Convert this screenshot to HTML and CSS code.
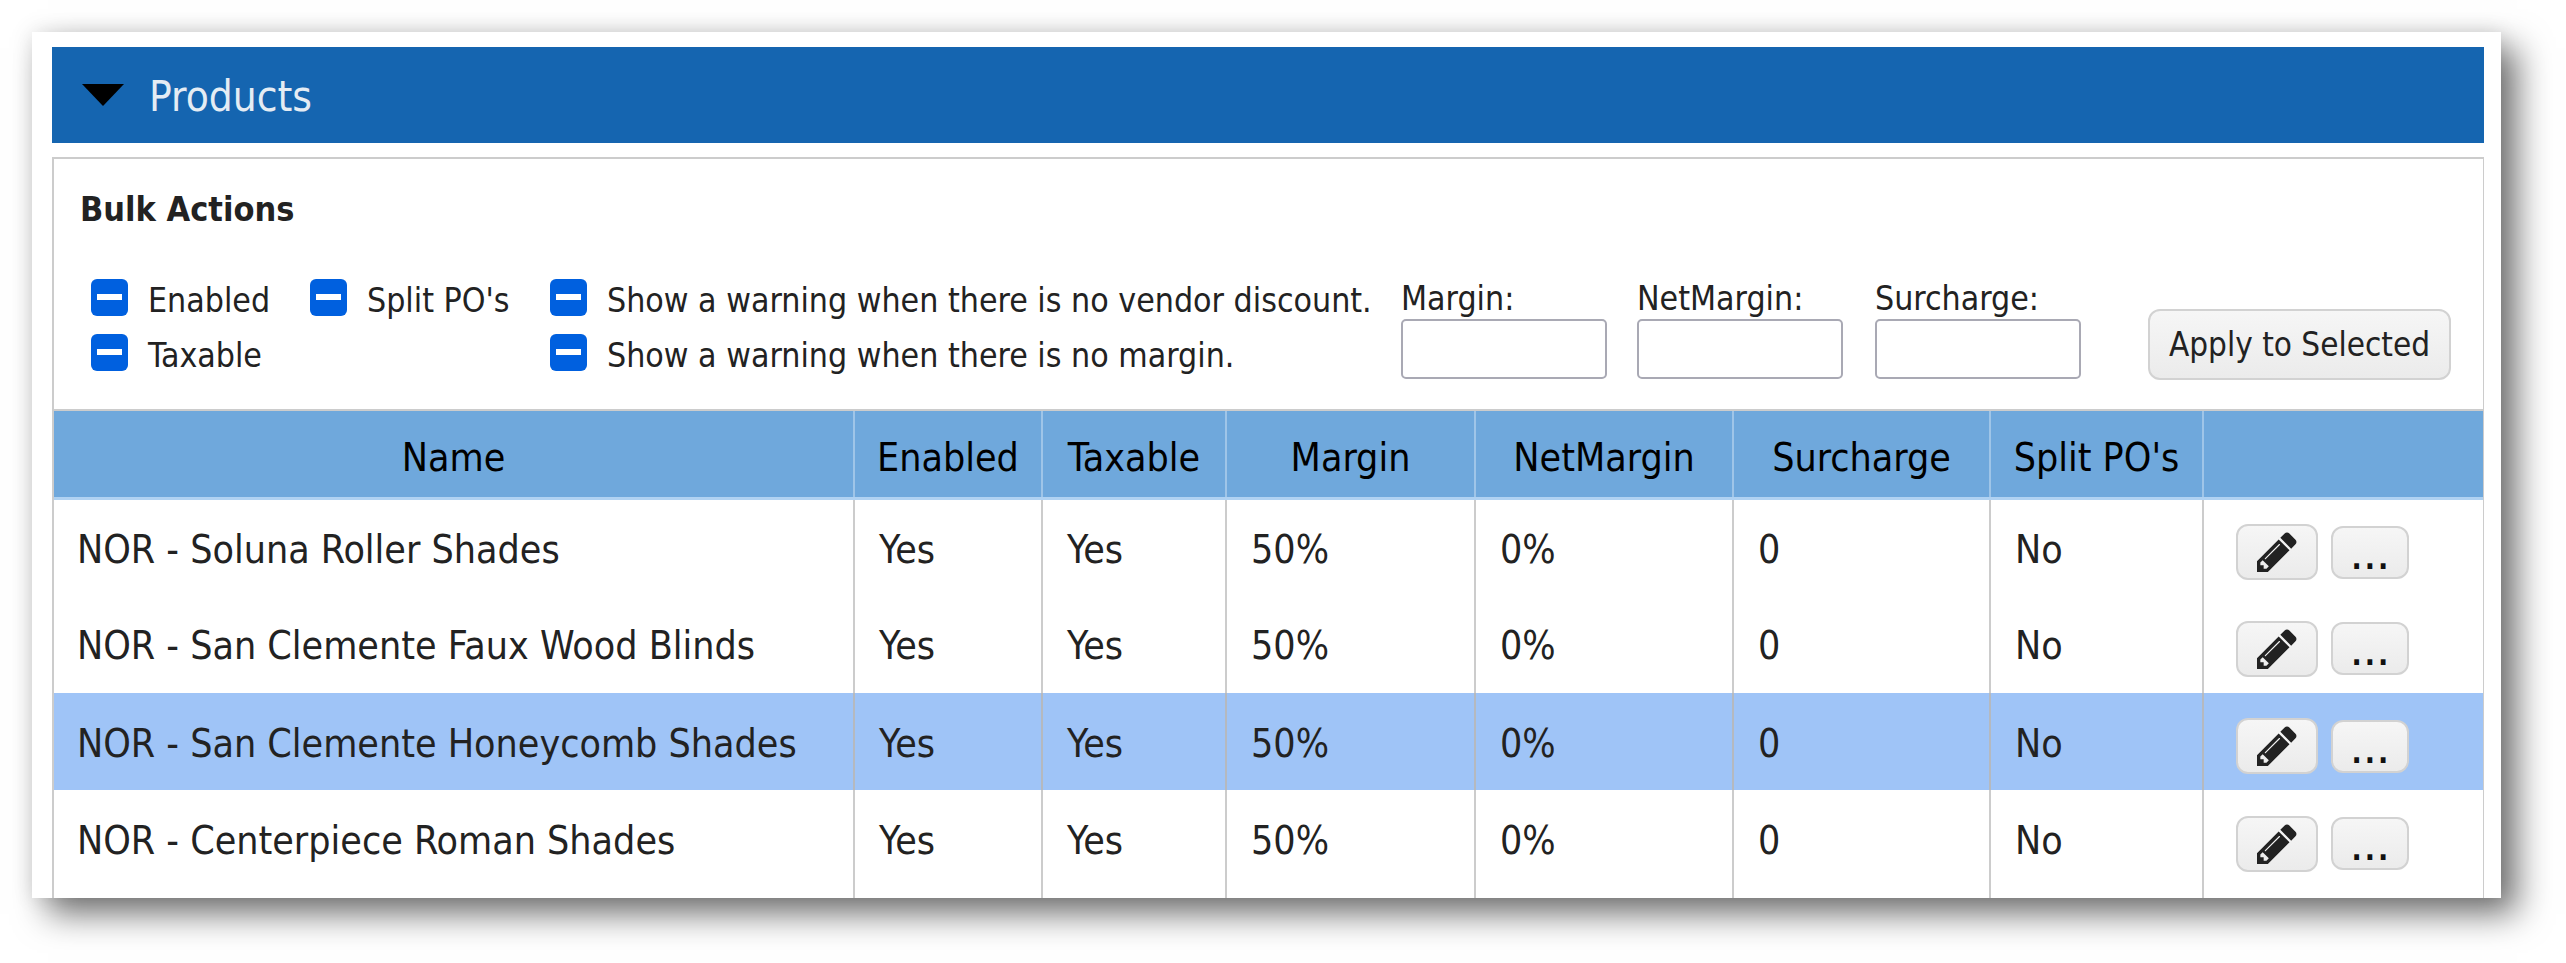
FILE: index.html
```html
<!DOCTYPE html>
<html lang="en">

<head>
    <meta charset="UTF-8">
    <title>Products</title>
    <link rel="stylesheet" href="styles.css">
</head>

<body>
    <div class="card">
        <div class="section-bar">
            <span class="arrow"></span>
            <span class="section-title">Products</span>
        </div>
        <div class="panel">
            <h2 class="bulk-title">Bulk Actions</h2>
            <div class="bulk-row">
                <div class="check-col check-col-a">
                    <label class="check"><span class="box"></span>Enabled</label>
                    <label class="check"><span class="box"></span>Taxable</label>
                </div>
                <div class="check-col check-col-b">
                    <label class="check"><span class="box"></span>Split PO's</label>
                </div>
                <div class="check-col check-col-c">
                    <label class="check"><span class="box"></span>Show a warning when there is no vendor discount.</label>
                    <label class="check"><span class="box"></span>Show a warning when there is no margin.</label>
                </div>
                <div class="field field-margin">
                    <label>Margin:</label>
                    <input type="text">
                </div>
                <div class="field field-net">
                    <label>NetMargin:</label>
                    <input type="text">
                </div>
                <div class="field field-surcharge">
                    <label>Surcharge:</label>
                    <input type="text">
                </div>
                <button class="btn apply-btn">Apply to Selected</button>
            </div>
            <table class="products">
                <colgroup>
                    <col class="col-name">
                    <col class="col-enabled">
                    <col class="col-taxable">
                    <col class="col-margin">
                    <col class="col-net">
                    <col class="col-surcharge">
                    <col class="col-split">
                    <col class="col-actions">
                </colgroup>
                <thead>
                    <tr>
                        <th>Name</th>
                        <th>Enabled</th>
                        <th>Taxable</th>
                        <th>Margin</th>
                        <th>NetMargin</th>
                        <th>Surcharge</th>
                        <th>Split PO's</th>
                        <th></th>
                    </tr>
                </thead>
                <tbody>
                    <tr>
                        <td>NOR - Soluna Roller Shades</td>
                        <td>Yes</td>
                        <td>Yes</td>
                        <td>50%</td>
                        <td>0%</td>
                        <td>0</td>
                        <td>No</td>
                        <td>
                            <div class="actions">
                                <button class="btn edit-btn"><svg class="pencil" viewBox="128 128 1536 1536"><path d="M491 1536l91-91-235-235-91 91v107h128v128h107zm523-928q0-22-22-22-10 0-17 7l-542 542q-7 7-7 17 0 22 22 22 10 0 17-7l542-542q7-7 7-17zm-54-192l416 416-832 832h-416v-416zm683 96q0 53-37 90l-166 166-416-416 166-165q36-38 90-38 53 0 91 38l235 234q37 39 37 91z"/></svg></button>
                                <button class="btn more-btn">...</button>
                            </div>
                        </td>
                    </tr>
                    <tr>
                        <td>NOR - San Clemente Faux Wood Blinds</td>
                        <td>Yes</td>
                        <td>Yes</td>
                        <td>50%</td>
                        <td>0%</td>
                        <td>0</td>
                        <td>No</td>
                        <td>
                            <div class="actions">
                                <button class="btn edit-btn"><svg class="pencil" viewBox="128 128 1536 1536"><path d="M491 1536l91-91-235-235-91 91v107h128v128h107zm523-928q0-22-22-22-10 0-17 7l-542 542q-7 7-7 17 0 22 22 22 10 0 17-7l542-542q7-7 7-17zm-54-192l416 416-832 832h-416v-416zm683 96q0 53-37 90l-166 166-416-416 166-165q36-38 90-38 53 0 91 38l235 234q37 39 37 91z"/></svg></button>
                                <button class="btn more-btn">...</button>
                            </div>
                        </td>
                    </tr>
                    <tr class="selected">
                        <td>NOR - San Clemente Honeycomb Shades</td>
                        <td>Yes</td>
                        <td>Yes</td>
                        <td>50%</td>
                        <td>0%</td>
                        <td>0</td>
                        <td>No</td>
                        <td>
                            <div class="actions">
                                <button class="btn edit-btn"><svg class="pencil" viewBox="128 128 1536 1536"><path d="M491 1536l91-91-235-235-91 91v107h128v128h107zm523-928q0-22-22-22-10 0-17 7l-542 542q-7 7-7 17 0 22 22 22 10 0 17-7l542-542q7-7 7-17zm-54-192l416 416-832 832h-416v-416zm683 96q0 53-37 90l-166 166-416-416 166-165q36-38 90-38 53 0 91 38l235 234q37 39 37 91z"/></svg></button>
                                <button class="btn more-btn">...</button>
                            </div>
                        </td>
                    </tr>
                    <tr>
                        <td>NOR - Centerpiece Roman Shades</td>
                        <td>Yes</td>
                        <td>Yes</td>
                        <td>50%</td>
                        <td>0%</td>
                        <td>0</td>
                        <td>No</td>
                        <td>
                            <div class="actions">
                                <button class="btn edit-btn"><svg class="pencil" viewBox="128 128 1536 1536"><path d="M491 1536l91-91-235-235-91 91v107h128v128h107zm523-928q0-22-22-22-10 0-17 7l-542 542q-7 7-7 17 0 22 22 22 10 0 17-7l542-542q7-7 7-17zm-54-192l416 416-832 832h-416v-416zm683 96q0 53-37 90l-166 166-416-416 166-165q36-38 90-38 53 0 91 38l235 234q37 39 37 91z"/></svg></button>
                                <button class="btn more-btn">...</button>
                            </div>
                        </td>
                    </tr>
                    <!-- next row runs off the bottom of the card -->
                    <tr>
                        <td></td>
                        <td></td>
                        <td></td>
                        <td></td>
                        <td></td>
                        <td></td>
                        <td></td>
                        <td></td>
                    </tr>
                </tbody>
            </table>
        </div>
    </div>
</body>

</html>
```
FILE: styles.css
```css
* {
    box-sizing: border-box;
}

body {
    margin: 0;
    height: 963px;
    overflow: hidden;
    background-color: #fff;
    padding: 32px 0 0 32px;
    font-family: "DejaVu Sans", "Liberation Sans", sans-serif;
    font-stretch: condensed;
    color: #222;
}

.card {
    width: 2469px;
    height: 866px;
    padding: 15px 17px 0 20px;
    overflow: hidden;
    background-color: #fff;
    box-shadow: 16px 16px 32px rgba(0, 0, 0, 0.55), 0 0 20px rgba(0, 0, 0, 0.1);
}

.section-bar {
    height: 96px;
    display: flex;
    align-items: center;
    padding: 0 0 0 30px;
    gap: 25px;
    background-color: #1565b0;
}

.arrow {
    width: 0;
    height: 0;
    border-left: 21px solid transparent;
    border-right: 21px solid transparent;
    border-top: 22px solid #000;
}

.section-title {
    padding-top: 2px;
    font-size: 42px;
    color: #e4ecf4;
}

.panel {
    margin-top: 14px;
    border: 2px solid #ccc;
    border-bottom: none;
    border-right-width: 1px;
}

.bulk-title {
    margin: 0;
    padding: 32px 0 0 26px;
    font-size: 34px;
    line-height: 36px;
    font-weight: bold;
    color: #222;
}

.bulk-row {
    display: flex;
    align-items: flex-start;
    height: 184px;
    padding: 52px 0 0 37px;
    border-bottom: 2px solid #ccc;
    font-size: 33.6px;
}

.check-col {
    display: flex;
    flex-direction: column;
    gap: 18px;
}

.check-col-a {
    width: 219px;
}

.check-col-b {
    width: 240px;
}

.check-col-c {
    width: 851px;
}

.check {
    display: flex;
    align-items: flex-start;
    gap: 20px;
    height: 37px;
    line-height: 44px;
    white-space: nowrap;
}

.box {
    position: relative;
    width: 37px;
    height: 37px;
    flex: none;
    border-radius: 6px;
    background-color: #0060df;
}

.box::after {
    content: "";
    position: absolute;
    left: 6px;
    top: 15px;
    width: 25px;
    height: 6px;
    background-color: #fff;
}

.field {
    display: flex;
    flex-direction: column;
    margin-top: -4px;
    gap: 0;
}

.field label {
    height: 44px;
    line-height: 48px;
}

.field input {
    width: 206px;
    height: 60px;
    border: 2px solid #a9a9b4;
    border-radius: 5px;
    background-color: #fff;
}

.field-margin {
    margin-right: 30px;
}

.field-net {
    margin-right: 32px;
}

.field-surcharge {
    margin-right: 67px;
}

.btn {
    border: 2px solid #d2d2d2;
    border-radius: 12px;
    background: linear-gradient(#f6f6f6, #ebebeb);
    font-family: inherit;
    font-stretch: condensed;
    color: #222;
}

.apply-btn {
    width: 303px;
    height: 71px;
    margin-top: 30px;
    font-size: 33px;
    padding: 0;
}

.products {
    width: 2429px;
    border-collapse: collapse;
    table-layout: fixed;
    font-size: 39px;
}

.col-name {
    width: 800px;
}

.col-enabled {
    width: 188px;
}

.col-taxable {
    width: 184px;
}

.col-margin {
    width: 249px;
}

.col-net {
    width: 258px;
}

.col-surcharge {
    width: 257px;
}

.col-split {
    width: 213px;
}

.col-actions {
    width: 280px;
}

.products th {
    height: 87px;
    padding: 8px 0 0;
    font-weight: normal;
    color: #000;
    background-color: #6fa8dc;
    border-left: 2px solid #9fc5e8;
    border-bottom: 3px solid #b0d2f2;
}

.products th:first-child,
.products td:first-child {
    border-left: none;
}

.products td {
    height: 97.3px;
    padding: 4px 0 0 24px;
    border-left: 2px solid #ccc;
    white-space: nowrap;
}

.products td:first-child {
    padding-left: 23px;
}

.products .selected td {
    background-color: #9fc4f7;
    border-left-color: #b5b9bf;
}

.actions {
    display: flex;
    align-items: center;
    gap: 13px;
    padding: 6px 0 0 8px;
}

.edit-btn {
    width: 82px;
    height: 56px;
    padding: 0;
    display: flex;
    align-items: center;
    justify-content: center;
}

.pencil {
    width: 40px;
    height: 40px;
    fill: #222;
}

.more-btn {
    width: 78px;
    height: 53px;
    padding: 13px 0 0 3px;
    font-size: 30px;
    font-weight: bold;
    line-height: 36px;
    letter-spacing: 3px;
    color: #111;
}
```
